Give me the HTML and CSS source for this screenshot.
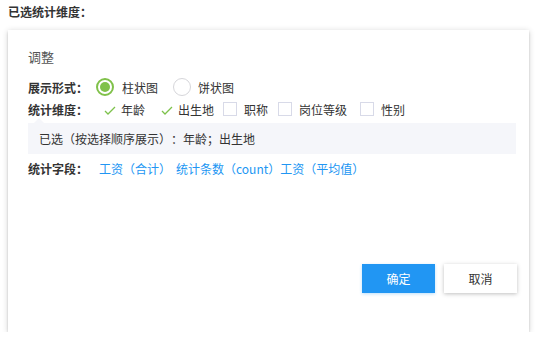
FILE: index.html
```html
<!DOCTYPE html>
<html>
<head>
<meta charset="utf-8">
<link rel="stylesheet" href="styles.css">
</head>
<body>
<div class="top-title">已选统计维度：</div>
<div class="card">
  <div class="card-title">调整</div>
  <div class="row">
    <span class="label">展示形式：</span>
    <span class="radio checked"><i></i>柱状图</span>
    <span class="radio"><i></i>饼状图</span>
  </div>
  <div class="row dims">
    <span class="label">统计维度：</span>
    <span class="opt checked gap-15"><svg width="14" height="14" viewBox="0 0 14 14"><path d="M2 9 L5 12 L12 5" fill="none" stroke="#7dc24b" stroke-width="1.3"/></svg>年龄</span>
    <span class="opt checked gap-9"><svg width="14" height="14" viewBox="0 0 14 14"><path d="M2 9 L5 12 L12 5" fill="none" stroke="#7dc24b" stroke-width="1.3"/></svg>出生地</span>
    <span class="opt gap-10"><i></i>职称</span>
    <span class="opt gap-13"><i></i>岗位等级</span>
    <span class="opt"><i></i>性别</span>
  </div>
  <div class="summary">已选（按选择顺序展示）：年龄；出生地</div>
  <div class="row fields">
    <span class="label">统计字段：</span>
    <span class="link first">工资（合计）</span>
    <span class="link">统计条数（count）</span><span class="link">工资（平均值）</span>
  </div>
  <div class="actions">
    <button class="btn primary">确定</button>
    <button class="btn">取消</button>
  </div>
</div>
</body>
</html>
```
FILE: styles.css
```css
html, body { margin: 0; padding: 0; background: #fff; }
body {
  font-family: "Noto Sans CJK SC", "Noto Sans", sans-serif;
  font-size: 12px;
  color: #333;
  padding: 4px 8px 0 8px;
  text-spacing-trim: space-all;
}
.top-title { font-weight: bold; color: #333; line-height: 16px; }
.card {
  margin-top: 10px;
  width: 521px;
  height: 302px;
  box-sizing: border-box;
  background: #fff;
  box-shadow: 0 1px 6px rgba(0,0,0,0.18), 0 2px 2px rgba(0,0,0,0.14);
  padding: 18px 13px 0 20px;
  display: flex;
  flex-direction: column;
}
.card-title { font-size: 13px; color: #555; line-height: 18px; margin-bottom: 12px; }
.row { display: flex; align-items: center; height: 18px; }
.row + .row { margin-top: 4px; }
.label { font-weight: bold; color: #333; width: 68px; flex: none; }
.radio { display: flex; align-items: center; margin-right: 15px; }
.radio i {
  width: 18px; height: 18px; box-sizing: border-box; border-radius: 50%;
  border: 1px solid #d6d6da; margin-right: 8px; position: relative;
}
.radio + .radio i { margin-right: 7px; }
.radio.checked i { border: 2px solid #80c14a; }
.radio.checked i::after {
  content: ""; position: absolute; left: 2px; top: 2px; width: 10px; height: 10px;
  border-radius: 50%; background: #80c14a;
}
.dims .label { width: 75px; }
.opt { display: flex; align-items: center; margin-right: 10px; }
.opt svg { margin-right: 4px; }
.opt i {
  width: 14px; height: 14px; box-sizing: border-box; border: 1px solid #d8dae8;
  margin-right: 7px;
}
.opt.gap-15 { margin-right: 15px; }
.opt.gap-9 { margin-right: 9px; }
.opt.gap-10 { margin-right: 10px; }
.opt.gap-13 { margin-right: 13px; }
.summary {
  margin-top: 5px;
  background: #f5f6fa;
  height: 31px;
  line-height: 31px;
  padding-left: 11px;
  color: #333;
  position: relative;
}
.summary::before {
  content: ""; position: absolute; left: 6px; top: -5px;
  border-left: 5px solid transparent; border-right: 5px solid transparent;
  border-bottom: 5px solid #f5f6fa;
}
.fields { margin-top: 5px; }
.fields .label { width: 71px; }
.link { color: #2196f3; }
.link.first { margin-right: 5px; }
.actions {
  margin-top: auto;
  margin-bottom: 39px;
  margin-right: -1px;
  display: flex;
  justify-content: flex-end;
  gap: 9px;
}
.btn {
  width: 73px; height: 29px; border: none; font: inherit; font-size: 12px;
  background: #fff; color: #333;
  box-shadow: 0 1px 4px rgba(0,0,0,0.25);
  padding: 0;
}
.btn.primary { background: #2196f3; color: #fff; box-shadow: 0 1px 3px rgba(33,150,243,0.3); }
```
